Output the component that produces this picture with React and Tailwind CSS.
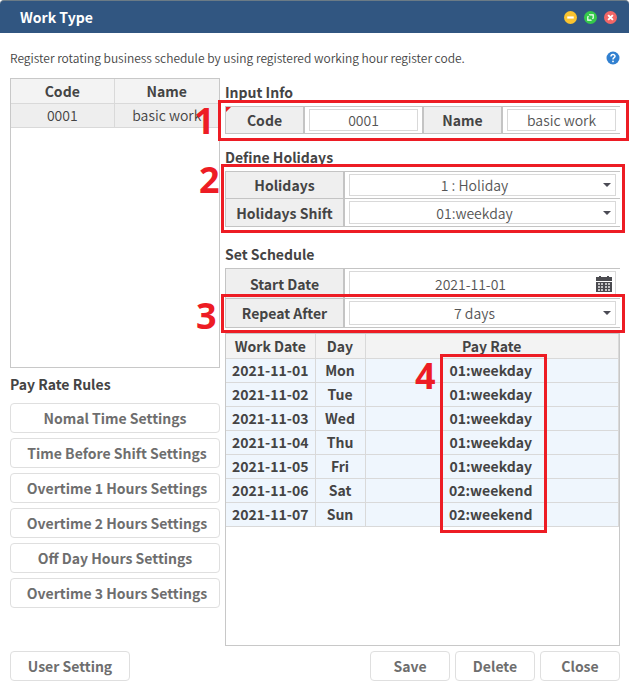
import { useState } from "react";

const schedule = [
  ["2021-11-01", "Mon", "01:weekday"],
  ["2021-11-02", "Tue", "01:weekday"],
  ["2021-11-03", "Wed", "01:weekday"],
  ["2021-11-04", "Thu", "01:weekday"],
  ["2021-11-05", "Fri", "01:weekday"],
  ["2021-11-06", "Sat", "02:weekend"],
  ["2021-11-07", "Sun", "02:weekend"],
];

const rules = [
  { label: "Nomal Time Settings" },
  { label: "Time Before Shift Settings", wide: true },
  { label: "Overtime 1 Hours Settings", wide: true },
  { label: "Overtime 2 Hours Settings", wide: true },
  { label: "Off Day Hours Settings" },
  { label: "Overtime 3 Hours Settings", wide: true },
];

function WindowControls() {
  return (
    <div className="flex gap-[7px]">
      <button type="button" aria-label="Minimize" className="size-[13px]">
        <svg viewBox="0 0 12 12" className="size-[13px]">
          <circle cx="6" cy="6" r="6" fill="#f9c32f" />
          <path d="M3 6h6" stroke="#fff" strokeWidth="2" />
        </svg>
      </button>
      <button type="button" aria-label="Maximize" className="size-[13px]">
        <svg viewBox="0 0 12 12" className="size-[13px]">
          <circle cx="6" cy="6" r="6" fill="#35c94a" />
          <path d="M5 3.5H8.5V6.5L6.5 8.5H3.5V5.5z" stroke="#fff" strokeWidth="1.1" fill="none" strokeDasharray="7.5 1.3" />
        </svg>
      </button>
      <button type="button" aria-label="Close window" className="size-[13px]">
        <svg viewBox="0 0 12 12" className="size-[13px]">
          <circle cx="6" cy="6" r="6" fill="#f26666" />
          <path d="M3.8 3.8l4.4 4.4M8.2 3.8l-4.4 4.4" stroke="#fff" strokeWidth="1.8" />
        </svg>
      </button>
    </div>
  );
}

function Heading({ children }) {
  return <h2 className="h-7 font-bold leading-7 text-[#444]">{children}</h2>;
}

function FieldLabel({ id, narrow, children }) {
  return (
    <label
      htmlFor={id}
      className={
        "flex shrink-0 items-center justify-center border-r-2 border-[#c4c4c4] bg-[#efefef] font-bold text-[#444] " +
        (narrow ? "w-[79px]" : "w-[119px]")
      }
    >
      {children}
    </label>
  );
}

const boxStyle =
  "block h-full w-full min-w-0 appearance-none rounded-none border border-[#d9d9d9] bg-white text-center leading-5 font-[350] text-[#555] outline-none";

function Select({ id, value }) {
  return (
    <div className="relative min-w-0 grow px-1 py-[2px]">
      <select id={id} defaultValue={value} className={boxStyle + " pr-4 [text-align-last:center]"}>
        <option>{value}</option>
      </select>
      <svg viewBox="0 0 8 4" className="pointer-events-none absolute top-1/2 right-[9px] h-1 w-2 -translate-y-1/2">
        <path d="M0 0h8L4 4z" fill="#4b4b55" />
      </svg>
    </div>
  );
}

function Mark({ className }) {
  return <div className={"pointer-events-none absolute border-3 border-[#ed1c24] " + className} />;
}

function MarkNumber({ className, children }) {
  return (
    <span className={"pointer-events-none absolute font-['Open_Sans',sans-serif] text-4xl leading-9 font-bold text-[#ed1c24] " + className}>
      {children}
    </span>
  );
}

function Button({ className = "", children }) {
  return (
    <button type="button" className={"h-[30px] rounded border border-[#dfdfdf] bg-white font-bold whitespace-nowrap text-[#6e6e6e] " + className}>
      {children}
    </button>
  );
}

export default function App() {
  const [code, setCode] = useState("0001");
  const [name, setName] = useState("basic work");
  const [date, setDate] = useState("2021-11-01");

  return (
    <div className="flex min-h-screen flex-col bg-white font-['Noto_Sans_CJK_KR',sans-serif] text-sm leading-5 text-[#666]">
      <header className="flex h-[33px] items-center justify-between rounded-t border-t border-[#6b7b86] bg-[#315681] pr-3 pl-5">
        <h1 className="font-bold text-white">Work Type</h1>
        <WindowControls />
      </header>

      <main className="flex grow flex-col px-[10px] pr-[9px] pb-[9px]">
        <div className="flex h-[45px] items-center justify-between pt-[5px]">
          <p className="text-xs font-[350] text-[#444]">Register rotating business schedule by using registered working hour register code.</p>
          <button type="button" aria-label="Help">
            <svg viewBox="0 0 14 14" className="size-[14px]">
              <circle cx="7" cy="7" r="6.5" fill="#3180d0" />
              <path d="M5 5.5C5 3 9 3 9 5.3C9 6.7 7 6.6 7 8.4" fill="none" stroke="#fff" strokeWidth="1.5" />
              <circle cx="7" cy="10.4" r="0.9" fill="#fff" />
            </svg>
          </button>
        </div>

        <div className="flex grow gap-[5px]">
          <section className="w-[210px] shrink-0">
            <div className="h-[290px] border border-[#c8c8c8]">
              <table className="w-full table-fixed border-collapse text-center">
                <colgroup>
                  <col className="w-[103px]" />
                  <col />
                </colgroup>
                <thead>
                  <tr className="h-6 bg-[#f3f3f3] text-[#444]">
                    <th className="border-r border-b border-[#d9d9d9] p-0 font-bold">Code</th>
                    <th className="border-b border-[#d9d9d9] p-0 font-bold">Name</th>
                  </tr>
                </thead>
                <tbody>
                  <tr className="h-6 bg-[#eee] font-[350] text-[#444]">
                    <td className="border-r border-b border-[#d9d9d9] p-0">0001</td>
                    <td className="border-b border-[#d9d9d9] p-0">basic work</td>
                  </tr>
                </tbody>
              </table>
            </div>
            <div className="pt-[2px]">
              <Heading>Pay Rate Rules</Heading>
            </div>
            <div className="flex flex-col gap-[5px] pt-[5px]">
              {rules.map((rule) => (
                <Button key={rule.label} className={rule.wide ? "pr-0 pl-1" : ""}>
                  {rule.label}
                </Button>
              ))}
            </div>
          </section>

          <section className="flex min-w-0 grow flex-col">
            <Heading>Input Info</Heading>
            <div className="relative flex h-7 border border-r-0 border-[#c4c4c4]">
              <FieldLabel id="code" narrow>Code</FieldLabel>
              <div className="min-w-0 flex-1 px-1 py-[2px]">
                <input id="code" value={code} onChange={(e) => setCode(e.target.value)} className={boxStyle} />
              </div>
              <div className="flex border-l-2 border-[#c4c4c4]">
                <FieldLabel id="name" narrow>Name</FieldLabel>
              </div>
              <div className="min-w-0 flex-1 px-1 py-[2px]">
                <input id="name" value={name} onChange={(e) => setName(e.target.value)} className={boxStyle} />
              </div>
              <svg viewBox="0 0 5 5" className="absolute top-0 left-0 size-[5px]">
                <path d="M0 0h5L0 5z" fill="#ed1c24" />
              </svg>
              <Mark className="-top-[7px] -right-[9px] -bottom-[8px] -left-[8px]" />
              <MarkNumber className="-top-[4px] -left-8">1</MarkNumber>
            </div>

            <div className="pt-[9px]">
              <Heading>Define Holidays</Heading>
            </div>
            <div className="relative border-b border-[#c4c4c4]">
              <div className="flex h-[27px] border-t border-l border-[#c4c4c4]">
                <FieldLabel id="holidays">Holidays</FieldLabel>
                <Select id="holidays" value="1 : Holiday" />
              </div>
              <div className="flex h-7 border-t border-l border-[#c4c4c4]">
                <FieldLabel id="shift">Holidays Shift</FieldLabel>
                <Select id="shift" value="01:weekday" />
              </div>
              <Mark className="-top-[7px] -right-[5px] -bottom-[7px] -left-1" />
              <MarkNumber className="-top-[9px] -left-[26px]">2</MarkNumber>
            </div>

            <div className="pt-[13px]">
              <Heading>Set Schedule</Heading>
            </div>
            <div className="flex h-[30px] border-t border-l border-[#c4c4c4]">
              <FieldLabel id="start">Start Date</FieldLabel>
              <div className="relative min-w-0 grow px-1 py-[2px]">
                <input id="start" value={date} onChange={(e) => setDate(e.target.value)} className={boxStyle + " pr-6"} />
                <svg viewBox="0 0 16 16" className="pointer-events-none absolute top-[7px] right-2 size-4">
                  <path d="M0 1h16v4H0zM3 0h2v3H3zM11 0h2v3h-2zM0 6h16v10H0z" fill="#4b4b50" />
                  <path d="M2 7h2v2H2zM5 7h2v2H5zM9 7h2v2H9zM12 7h2v2h-2zM2 10h2v2H2zM5 10h2v2H5zM9 10h2v2H9zM12 10h2v2h-2zM2 13h2v2H2zM5 13h2v2H5zM9 13h2v2H9zM12 13h2v2h-2z" fill="#c4c4c6" />
                </svg>
              </div>
            </div>
            <div className="relative flex h-[30px] border border-r-0 border-[#c4c4c4]">
              <FieldLabel id="repeat">Repeat After</FieldLabel>
              <Select id="repeat" value="7 days" />
              <Mark className="-top-[5px] -right-[5px] -bottom-[6px] -left-[5px]" />
              <MarkNumber className="-top-[1px] -left-[30px]">3</MarkNumber>
            </div>

            <div className="relative mt-[5px] grow border border-[#c8c8c8]">
              <table className="w-full table-fixed border-collapse text-center font-bold text-[#444]">
                <colgroup>
                  <col className="w-[89px]" />
                  <col className="w-[50px]" />
                  <col />
                </colgroup>
                <thead>
                  <tr className="h-6 bg-[#f3f3f3]">
                    <th className="border-r border-b border-[#d9d9d9] p-0">Work Date</th>
                    <th className="border-r border-b border-[#d9d9d9] p-0">Day</th>
                    <th className="border-r border-b border-[#d9d9d9] p-0">Pay Rate</th>
                  </tr>
                </thead>
                <tbody>
                  {schedule.map(([workDate, day, rate]) => (
                    <tr key={workDate} className="h-6 bg-[#eff6fd]">
                      <td className="border-r border-b border-[#d9d9d9] p-0">{workDate}</td>
                      <td className="border-r border-b border-[#d9d9d9] p-0">{day}</td>
                      <td className="border-r border-b border-[#d9d9d9] p-0 pr-[2px]">{rate}</td>
                    </tr>
                  ))}
                </tbody>
              </table>
              <Mark className="top-5 left-[214px] h-[179px] w-[107px]" />
              <MarkNumber className="top-6 left-[189px]">4</MarkNumber>
            </div>
          </section>
        </div>

        <footer className="flex gap-[5px] pt-[5px]">
          <Button className="mr-auto w-[120px]">User Setting</Button>
          <Button className="w-20">Save</Button>
          <Button className="w-20">Delete</Button>
          <Button className="w-20">Close</Button>
        </footer>
      </main>
    </div>
  );
}
